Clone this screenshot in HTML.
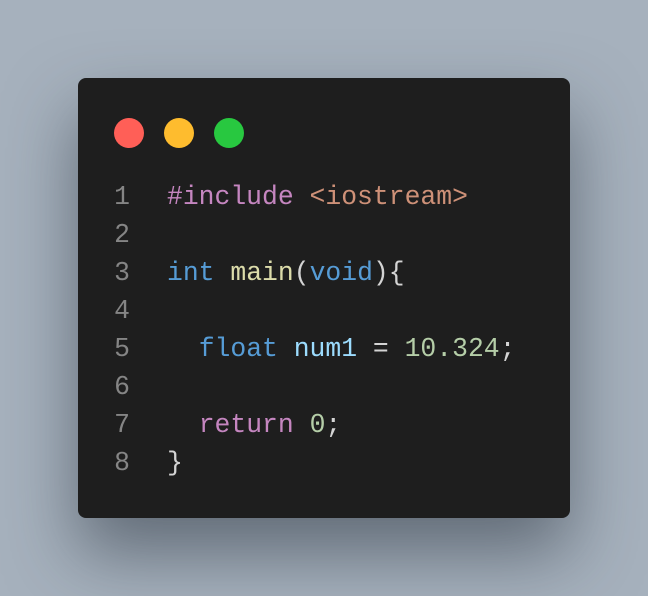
<!DOCTYPE html>
<html><head><style>
html,body{margin:0;padding:0;width:648px;height:596px;overflow:hidden;background:#a6b1bd;}
.card{position:absolute;left:78px;top:78px;width:492px;height:440px;background:#1e1e1e;border-radius:8px;box-shadow:0 35px 70px rgba(40,50,60,0.55);}
.dot{position:absolute;top:118px;width:30px;height:30px;border-radius:50%;}
.code{position:absolute;left:0;top:178px;font-family:"Liberation Mono",monospace;font-size:26.4px;line-height:38px;white-space:pre;}
.ln{position:absolute;left:100px;width:30px;text-align:right;color:#858585;}
.src{position:absolute;left:167px;color:#d4d4d4;}
.k{color:#c586c0}.s{color:#ce9178}.t{color:#569cd6}.f{color:#dcdcaa}.v{color:#9cdcfe}.n{color:#b5cea8}
</style></head><body>
<div class="card"></div>
<div class="dot" style="left:114px;background:#ff5f57"></div>
<div class="dot" style="left:164px;background:#febc2e"></div>
<div class="dot" style="left:214px;background:#28c840"></div>
<div class="code"><div class="ln">1
2
3
4
5
6
7
8</div><div class="src"><span class="k">#include</span> <span class="s">&lt;iostream&gt;</span>

<span class="t">int</span> <span class="f">main</span>(<span class="t">void</span>){

  <span class="t">float</span> <span class="v">num1</span> = <span class="n">10.324</span>;

  <span class="k">return</span> <span class="n">0</span>;
}</div></div>
</body></html>
